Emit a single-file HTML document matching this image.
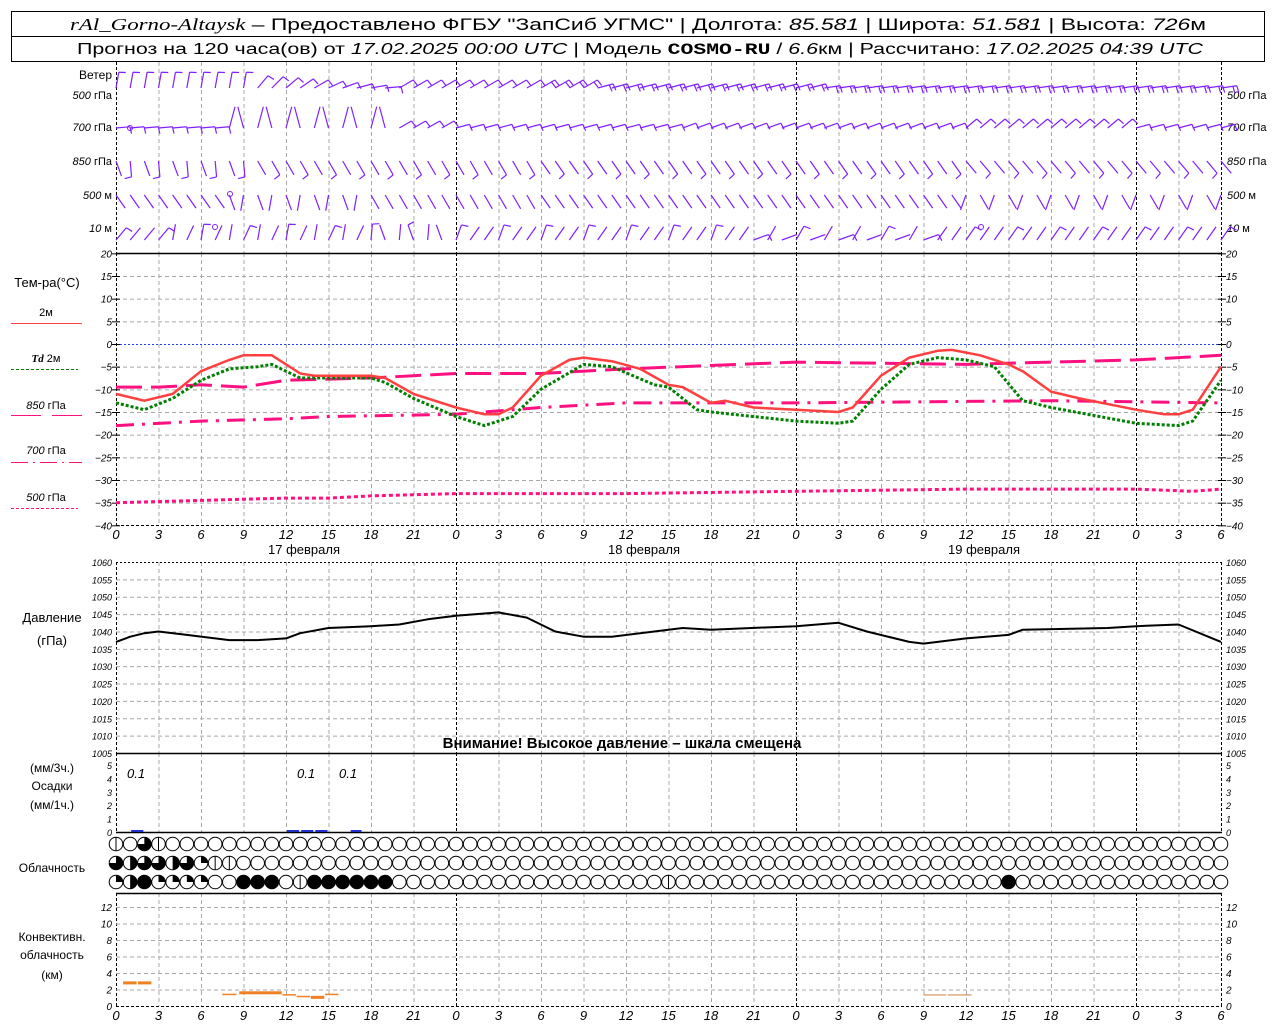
<!DOCTYPE html>
<html><head><meta charset="utf-8">
<style>
html,body{margin:0;padding:0;background:#fff;width:1280px;height:1024px;overflow:hidden}
svg{display:block}
text{font-family:"Liberation Sans",sans-serif;fill:#000}
.it{font-style:italic}
.sr{font-family:"Liberation Serif",serif;font-style:italic}
</style></head><body>
<svg id="s" width="1280" height="1024" xmlns="http://www.w3.org/2000/svg">
<rect x="11.5" y="11.5" width="1253" height="50" fill="none" stroke="#000"/>
<line x1="11" y1="36.5" x2="1265" y2="36.5" stroke="#000"/>
<text x="638" y="30" font-size="17" text-anchor="middle" textLength="1136" lengthAdjust="spacingAndGlyphs"><tspan class="sr">rAl_Gorno-Altaysk</tspan> – Предоставлено ФГБУ "ЗапСиб УГМС" | Долгота: <tspan class="it">85.581</tspan> | Широта: <tspan class="it">51.581</tspan> | Высота: <tspan class="it">726</tspan>м</text>
<text x="640" y="54" font-size="15.5" text-anchor="middle" textLength="1126" lengthAdjust="spacingAndGlyphs">Прогноз на 120 часа(ов) от <tspan class="it">17.02.2025 00:00 UTC</tspan>  | Модель <tspan font-weight="bold" font-family="Liberation Mono">COSMO-RU</tspan> / <tspan class="it">6.6</tspan>км | Рассчитано: <tspan class="it">17.02.2025 04:39 UTC</tspan></text>

<g font-size="11">
<text x="112" y="79" text-anchor="end" font-size="12">Ветер</text>
<text x="112" y="99" text-anchor="end"><tspan class="it">500</tspan> гПа</text>
<text x="112" y="131" text-anchor="end"><tspan class="it">700</tspan> гПа</text>
<text x="112" y="165" text-anchor="end"><tspan class="it">850</tspan> гПа</text>
<text x="112" y="199" text-anchor="end"><tspan class="it">500</tspan> м</text>
<text x="112" y="232" text-anchor="end"><tspan class="it">10</tspan>   м</text>
<text x="1227" y="99"><tspan class="it">500</tspan> гПа</text>
<text x="1227" y="131"><tspan class="it">700</tspan> гПа</text>
<text x="1227" y="165"><tspan class="it">850</tspan> гПа</text>
<text x="1227" y="199"><tspan class="it">500</tspan>  м</text>
<text x="1227" y="232"><tspan class="it">10</tspan>    м</text>
</g>
<g font-size="12" text-anchor="middle">
<text x="47" y="287" font-size="13">Тем-ра(°C)</text>
<text x="46" y="316" font-size="11">2м</text>
<text x="46" y="362" font-size="11"><tspan class="sr" font-weight="bold">Td</tspan>  2м</text>
<text x="46" y="409" font-size="11"><tspan class="it">850</tspan> гПа</text>
<text x="46" y="454" font-size="11"><tspan class="it">700</tspan> гПа</text>
<text x="46" y="501" font-size="11"><tspan class="it">500</tspan> гПа</text>
<text x="52" y="622" font-size="13">Давление</text>
<text x="52" y="645" font-size="13">(гПа)</text>
<text x="52" y="772">(мм/3ч.)</text>
<text x="52" y="790">Осадки</text>
<text x="52" y="809">(мм/1ч.)</text>
<text x="52" y="872">Облачность</text>
<text x="52" y="941">Конвективн.</text>
<text x="52" y="959">облачность</text>
<text x="52" y="979">(км)</text>
<text x="304" y="554" font-size="13">17 февраля</text>
<text x="644" y="554" font-size="13">18 февраля</text>
<text x="984" y="554" font-size="13">19 февраля</text>
<text x="622" y="748" font-size="15" font-weight="bold">Внимание! Высокое давление – шкала смещена</text>
</g>
<g font-size="13" class="it">
<text x="127" y="778">0.1</text><text x="297" y="778">0.1</text><text x="339" y="778">0.1</text>
</g>
<line x1="11" y1="323.5" x2="82" y2="323.5" stroke="#ff4040" stroke-width="1"/>
<line x1="11" y1="369.5" x2="78" y2="369.5" stroke="#008000" stroke-dasharray="3,2"/>
<line x1="11" y1="415.5" x2="41" y2="415.5" stroke="#ff1080"/><line x1="52" y1="415.5" x2="82" y2="415.5" stroke="#ff1080"/>
<line x1="11" y1="462.5" x2="82" y2="462.5" stroke="#ff1080" stroke-dasharray="17,5,2,5"/>
<line x1="11" y1="508.5" x2="78" y2="508.5" stroke="#ff1080" stroke-dasharray="3,2"/>
<g id="g"></g>
</svg>
<script>
var S='http://www.w3.org/2000/svg',G=document.getElementById('g');
function el(n,a,t){var e=document.createElementNS(S,n);for(var k in a)e.setAttribute(k,a[k]);if(t!=null)e.textContent=t;G.appendChild(e);return e}
function X(h){return 116+h*1105/78}
function line(x1,y1,x2,y2,c,w,d){var a={x1:x1,y1:y1,x2:x2,y2:y2,stroke:c,'stroke-width':w||1};if(d)a['stroke-dasharray']=d;return el('line',a)}
var GR='#a8a8a8',DS='4,3';
function vgrid(y1,y2){for(var h=0;h<=78;h+=3){var day=(h%24==0)||h==78;line(X(h)+.5,y1,X(h)+.5,y2,day?'#000':GR,1,day?'3,2':DS)}}
vgrid(62,253);vgrid(253,525);vgrid(562,753);vgrid(753,832);vgrid(893,1006);
function TY(t){return 344-t*4.533}
for(var t=15;t>-40;t-=5){if(t!=0)line(116,TY(t)+.5,1222,TY(t)+.5,GR,1,DS)}
line(116,344.5,1222,344.5,'#2040ff',1,'2,2');
line(116,253.5,1222,253.5,'#000',1.5);line(116,525.5,1222,525.5,'#000',1,'3,2');
function PY(p){return 562+(1060-p)*191/55}
for(var p=1055;p>1005;p-=5)line(116,PY(p)+.5,1222,PY(p)+.5,GR,1,DS);
line(116,562.5,1222,562.5,'#000',1,'2,2');line(116,753.5,1222,753.5,'#000',1.5);line(116,832.5,1222,832.5,'#000',1.5);
function CY(k){return 1006-k*8.25}
for(var k=2;k<=12;k+=2)line(116,CY(k)+.5,1222,CY(k)+.5,GR,1,DS);
line(116,893.5,1222,893.5,'#000',1.5);line(116,1006.5,1222,1006.5,'#000',1,'3,2');
function lab(x,y,s,fs,anc){el('text',{x:x,y:y,'font-size':fs,'text-anchor':anc,'font-style':'italic'},s)}
for(var t=20;t>=-40;t-=5){lab(112,TY(t)+4,t<0?'−'+(-t):t,10,'end');lab(1226,TY(t)+4,t<0?'−'+(-t):t,10,'start');line(112,TY(t)+.5,120,TY(t)+.5,'#000');line(1218,TY(t)+.5,1226,TY(t)+.5,'#000')}
for(var p=1060;p>=1005;p-=5){lab(112,PY(p)+4,p,9,'end');lab(1226,PY(p)+4,p,9,'start')}
for(var m=0;m<=5;m++){var y=832-m*13.4;lab(112,y+4,m,9,'end');lab(1226,y+4,m,9,'start')}
for(var k=0;k<=12;k+=2){lab(112,CY(k)+4,k,10,'end');lab(1226,CY(k)+4,k,10,'start')}
for(var h=0;h<=78;h+=3){var s=h%24;lab(X(h),539,s,13,'middle');lab(X(h),1020,s,13,'middle')}
function curve(pts,f,c,w,d){var s='';for(var i=0;i<pts.length;i+=2)s+=X(pts[i]).toFixed(1)+','+f(pts[i+1]).toFixed(1)+' ';var a={points:s,fill:'none',stroke:c,'stroke-width':w,'stroke-linejoin':'round'};if(d)a['stroke-dasharray']=d;el('polyline',a)}
curve([0,-35,6,-34.5,12,-34,15,-34,18,-33.5,24,-33,36,-33,48,-32.5,60,-32,72,-32,76,-32.5,78,-32],TY,'#ff1080',3,'4,3');
curve([0,-18,6,-17,12,-16.5,15,-16,24,-15.5,30,-14,36,-13,48,-13,66,-12.5,78,-13],TY,'#ff1080',3,'18,8,3,8');
curve([0,-9.5,3,-9.5,6,-9,9,-9.5,12,-8,18,-7.5,21,-7,24,-6.5,30,-6.5,36,-5.5,48,-4,60,-4.5,66,-4,72,-3.5,78,-2.5],TY,'#ff1080',3,'26,9');
curve([0,-13,2,-14.5,4,-12,6,-8,8,-5.5,10,-5,11,-4.5,13,-7.5,18,-7.5,19,-8.5,21,-12,24,-16,26,-18,28,-16,30,-10,33,-4.5,35,-5,38,-9,39,-9.5,41,-14.5,42,-15,48,-17,51,-17.5,52,-17,54,-10,56,-4.5,58,-3,60,-3.5,62,-5,64,-12.5,66,-14,72,-17.5,75,-18,76,-17,78,-8],TY,'#008000',3,'3,2');
curve([0,-11,2,-12.5,4,-11,6,-6,8,-3.5,9,-2.5,11,-2.5,13,-6.5,14,-7,18,-7,19,-7.5,21,-11,24,-14,26,-15.5,27,-15.5,28,-14,30,-7,32,-3.5,33,-3,35,-3.8,37,-5.5,39,-9,40,-9.5,42,-13,43,-12.5,45,-14,48,-14.5,51,-15,52,-14,54,-7,56,-3,58,-1.5,59,-1.3,61,-2.5,63,-4.5,64,-6,66,-10.5,68,-12,72,-14.5,74,-15.5,75,-15.5,76,-14.5,78,-5],TY,'#ff4040',2.5);
curve([0,1037,1,1038.5,2,1039.5,3,1040,5,1039,8,1037.5,10,1037.5,12,1038,13,1039.5,15,1041,18,1041.5,20,1042,22,1043.5,24,1044.5,27,1045.5,29,1044,31,1040,33,1038.5,35,1038.5,38,1040,40,1041,42,1040.5,48,1041.5,51,1042.5,53,1040,56,1037,57,1036.5,60,1038,63,1039,64,1040.5,70,1041,72,1041.5,75,1042,78,1037],PY,'#000',2);
[[1,2],[12,13],[13,14],[14,15],[16.5,17.4]].forEach(function(b){el('rect',{x:X(b[0])+1,y:830,width:X(b[1])-X(b[0])-2,height:2,fill:'#2030d0'})});
[[0.5,1.45,2.8,3],[1.55,2.5,2.8,3],[7.5,8.5,1.4,1.5],[8.7,11.7,1.6,3],[11.75,12.7,1.35,1.5],[12.75,13.7,1.15,1.5],[13.75,14.7,1.05,3],[14.75,15.7,1.4,1.5]].forEach(function(b){el('rect',{x:X(b[0]),y:CY(b[2])-b[3]/2,width:X(b[1])-X(b[0]),height:b[3],fill:'#f08020'})});
[[57,58.6],[58.7,60.4]].forEach(function(b){el('rect',{x:X(b[0]),y:CY(1.4),width:X(b[1])-X(b[0]),height:1,fill:'#d08040'})});
var R=[{0:1,2:4,3:1},{0:4,1:3,2:4,3:4,4:3,5:4,6:2,7:1,8:1},{0:2,1:3,2:5,3:2,4:2,5:2,6:2,9:5,10:5,11:5,13:1,14:5,15:5,16:5,17:5,18:5,19:5,39:1,63:5}],CYs=[844,863,882];
function cloud(cx,cy,t){var r=6.8;el('circle',{cx:cx,cy:cy,r:r,fill:t==5?'#000':'#fff',stroke:'#000','stroke-width':1});
if(t==1)line(cx,cy-r,cx,cy+r,'#000');
if(t==2)el('path',{d:'M'+cx+','+cy+' L'+cx+','+(cy-r)+' A'+r+','+r+' 0 0 1 '+(cx+r)+','+cy+' Z',fill:'#000'});
if(t==3)el('path',{d:'M'+cx+','+(cy-r)+' A'+r+','+r+' 0 0 1 '+cx+','+(cy+r)+' Z',fill:'#000'});
if(t==4)el('path',{d:'M'+cx+','+cy+' L'+cx+','+(cy-r)+' A'+r+','+r+' 0 1 1 '+(cx-r)+','+cy+' Z',fill:'#000'});}
for(var row=0;row<3;row++)for(var i=0;i<=78;i++)cloud(X(i),CYs[row],R[row][i]||0);
var WC='#8020ff',WY=[92,128,161,195,228];
function barb(x,y,ang,len,nb){var a=ang*Math.PI/180,ex=x+Math.sin(a)*len,ey=y-Math.cos(a)*len;line(x,y,ex,ey,WC,1.2);
for(var b=0;b<nb;b++){var bx=x+Math.sin(a)*(len-b*4),by=y-Math.cos(a)*(len-b*4),ba=a+Math.PI/2.2;line(bx,by,bx+Math.sin(ba)*7,by-Math.cos(ba)*7,WC,1.2)}}
for(var h=0;h<=78;h++){var x=X(h);
var a5=h<10?190:h<20?220+(h-10)*5:h<34?240:h<50?255:262;barb(x,WY[0]-4,a5+180,16,h<30?1:2);
var a7=h<8?265:h<20?(h%2==0?195:165):h<24?240:h<40?255:h<60?250:h<72?230:255;barb(x,WY[1],a7+180,h>=8&&h<20?22:14,h>=8&&h<20?0:1);
var a8=h<10?160+(h%2)*15:h<30?150:h<60?145:140;barb(x,WY[2],a8,16,h%2);
var a50=h<8?145:h<18?(h%2?190:160):h<30?150:h<60?145:(h%2?150:200);barb(x,WY[3],a50,16,0);
var a10=h<4?40:h<18?(h%2?25:10):h<24?(h%2?340:5):h<45?(h%3==0?20:35):h<58?(h%2?70:30):35;barb(x,WY[4]+12,a10,16,h%3==0?1:0);}
el('circle',{cx:130,cy:128,r:2.5,fill:'none',stroke:WC});el('circle',{cx:230,cy:194,r:2.5,fill:'none',stroke:WC});el('circle',{cx:215,cy:227,r:2.5,fill:'none',stroke:WC});el('circle',{cx:981,cy:227,r:2.5,fill:'none',stroke:WC});
</script>
</body></html>
